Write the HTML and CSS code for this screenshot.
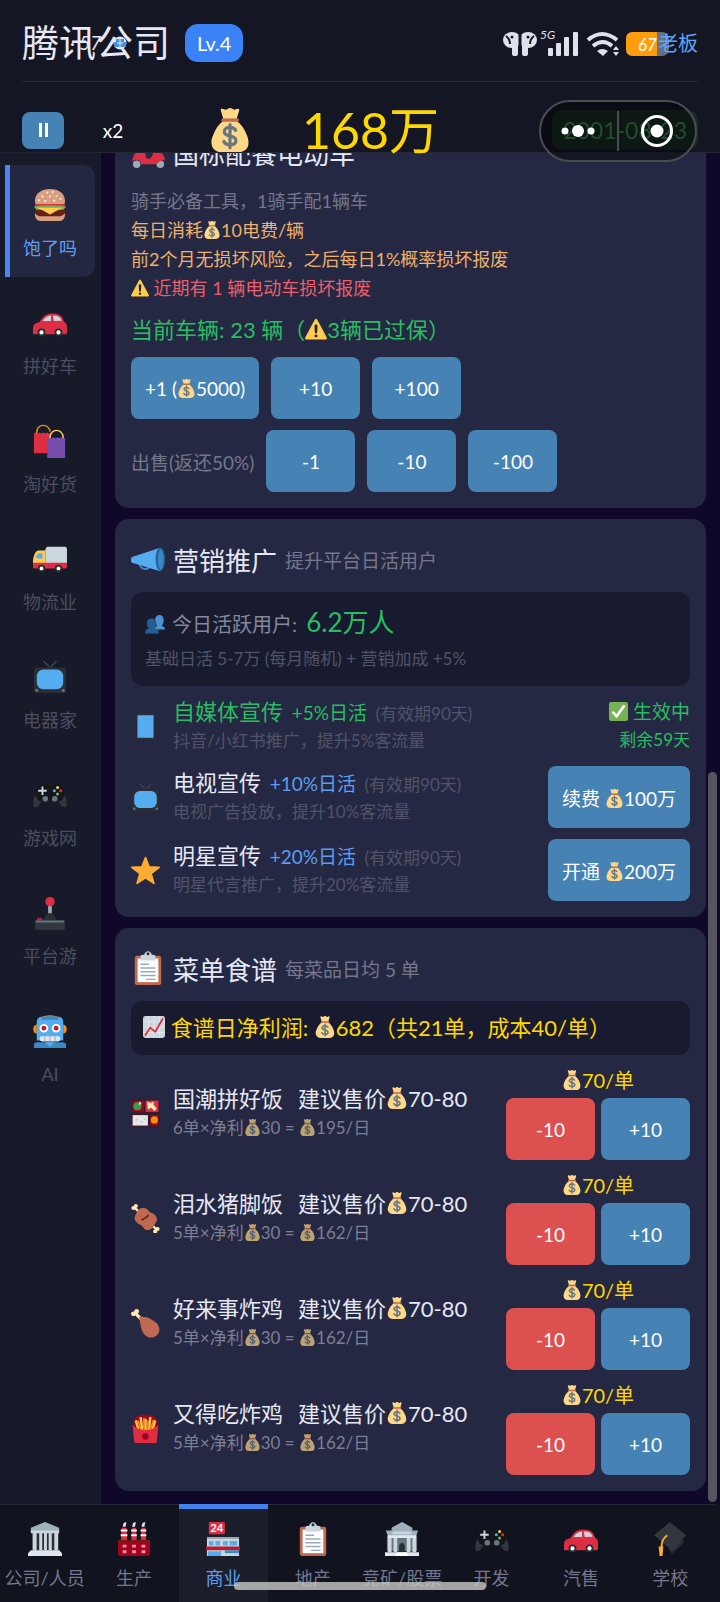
FILE: index.html
```
<!DOCTYPE html>
<html lang="zh-CN">
<head>
    <meta charset="UTF-8">
    <meta name="viewport" content="width=device-width, initial-scale=1.0">
    <title>腾讯公司</title>
    <link rel="stylesheet" href="styles.css">
</head>
<body>
    <!-- Icon sprite -->
    <svg class="sprite" aria-hidden="true">
        <symbol id="bag" viewBox="0 0 36 36">
            <path fill="#fdd888" d="M31.9 22.6c-1.7-5.2-4.7-9.3-8.8-12.4L25.5 2c.4-1.8-1.600-1.700-2.800-.9-1 .7-1.800.2-2.700-.4-1.200-.8-2.500-.8-3.700 0-.9.600-1.900 1.100-3 .4-1.200-.8-3.400-.9-2.800.9l2.400 8.200C8.700 13.300 5.800 17.400 4.100 22.600 3 25.200 2.500 27 3 30c.8 4 4 6 8 6h14c4 0 7.400-2 8-6 .4-3-.1-4.800-1.100-7.400z"/>
            <path fill="#bf6952" d="M24.500 8.600H11.800c-1.200 0-1.200 2.600 0 2.600h12.700c1.200 0 1.200-2.600 0-2.600z"/>
            <path fill="none" stroke="#67757f" stroke-width="2.600" stroke-linecap="round" d="M22.600 18.300c-.7-1.600-2.400-2.400-4.600-2.400-2.800 0-4.700 1.300-4.700 3.500 0 4.800 9.600 2.400 9.600 7.200 0 2.200-2 3.500-4.900 3.500-2.400 0-4.300-1-5-2.800M18 13.500v19"/>
        </symbol>
        <symbol id="warn" viewBox="0 0 36 36">
            <path fill="#ffcc4d" d="M2.700 35c-2.200 0-3.200-1.600-2.100-3.500L16.100 2.500c1-1.900 2.800-1.900 3.800 0l15.500 29c1 1.900.1 3.500-2.100 3.500z"/>
            <path fill="#231f20" d="M15.600 13c0-1.400 1-2.300 2.400-2.300s2.400.9 2.400 2.300l-.5 10.500c-.1 2.500-3.700 2.500-3.800 0z"/><circle fill="#231f20" cx="18" cy="29.300" r="2.400"/>
        </symbol>
        <symbol id="burger" viewBox="0 0 36 36">
            <path fill="#d99e82" d="M2 14C2 5.500 9 1 18 1s16 4.500 16 13c0 3-2 4-4 4H6c-2 0-4-1-4-4zM2 27h32c0 5-2 8-7 8H9c-5 0-7-3-7-8z"/>
            <path fill="#662113" d="M2 24c0-2 3-3 16-3s16 1 16 3c0 5-4 6-8 6H10c-4 0-8-1-8-6z"/>
            <path fill="#dd2e44" d="M2 17h32v4H2z"/><path fill="#77b255" d="M1 20c3-2 31-2 34 0l-3 3H4z"/>
            <path fill="#ffcc4d" d="M4 21h28l-7 3-7 4-7-4z"/>
            <g fill="#ffe8b6"><circle cx="10" cy="9" r="1.200"/><circle cx="15" cy="5" r="1.200"/><circle cx="21" cy="4.500" r="1.200"/><circle cx="18" cy="9" r="1.200"/><circle cx="25" cy="8.500" r="1.200"/><circle cx="29" cy="11.500" r="1.200"/><circle cx="13" cy="14" r="1.200"/><circle cx="22.500" cy="13.500" r="1.200"/><circle cx="6.500" cy="13" r="1.200"/></g>
        </symbol>
        <symbol id="car" viewBox="0 0 36 36">
            <path fill="#dd2e44" d="M0 29v-5c0-4 2-6 7-7 3-5 6-9 13-9 9 0 11 3 13 9 3 1 3 4 3 7v4c0 1-1 2-2 2H2c-1 0-2 0-2-1z"/>
            <path fill="#ccd6dd" d="M10 16c2-3 4-5.500 9-6v6zM21 10c6 0 8 2 9.500 5.500L22 16z"/>
            <circle fill="#292f33" cx="9" cy="28" r="4.200"/><circle fill="#fff" cx="9" cy="28" r="2.200"/><circle fill="#292f33" cx="27" cy="28" r="4.200"/><circle fill="#fff" cx="27" cy="28" r="2.200"/>
        </symbol>
        <symbol id="bags" viewBox="0 0 36 36">
            <path fill="#dd2e44" d="M1 10l2-1 2 1 2-1 2 1 2-1 2 1 2-1 2 1 2-1v22H1z"/>
            <path fill="none" stroke="#f4900c" stroke-width="1.500" d="M4 10C3-1 17-1 18 8"/>
            <path fill="#744eaa" d="M15 15l2-1 2 1 3-1 2 1 2-1 2 1 2-1 4 1v21H15z"/>
            <path fill="none" stroke="#ffcc4d" stroke-width="1.500" d="M18 15c0-11 14-11 14 0"/>
        </symbol>
        <symbol id="truck" viewBox="0 0 36 36">
            <path fill="#ccd6dd" d="M13 9c0-2 1-4 3-4h18c1 0 2 1 2 3v16H13z"/>
            <path fill="#ffcc4d" d="M0 24v-5c1-6 3-10 6-10h7v14z"/><path fill="#5dadec" d="M3 17c1-4 2-5 4-5h3v6z"/>
            <path fill="#dd2e44" d="M0 22h36v4c0 2-1 2-2 2H2c-1 0-2 0-2-1z"/>
            <circle fill="#292f33" cx="9" cy="28" r="4"/><circle fill="#fff" cx="9" cy="28" r="2"/><circle fill="#292f33" cx="27" cy="28" r="4"/><circle fill="#fff" cx="27" cy="28" r="2"/>
        </symbol>
        <symbol id="tv" viewBox="0 0 36 36">
            <path fill="none" stroke="#414a50" stroke-width="1.300" d="M11 1l7 7 7-7"/>
            <path fill="#292f33" d="M14 8c1-2 7-2 8 0h10c2 0 3 1 3 3v21c0 2-1 3-3 3H4c-2 0-3-1-3-3V11c0-2 1-3 3-3z"/>
            <rect fill="#55acee" x="4" y="10" width="28" height="21" rx="7"/><circle fill="#67757f" cx="4" cy="32" r="1.600"/><circle fill="#67757f" cx="32" cy="32" r="1.600"/>
        </symbol>
        <symbol id="pad" viewBox="0 0 36 36">
            <path fill="#31373d" d="M1 21l5-6h24l5 6c1 6 1 10-1 10-5 0-5-6-9-7H11c-4 1-4 7-9 7-2 0-2-4-1-10z"/>
            <path fill="#141719" d="M3 16c0-5 3-9 7-9 3 0 3 1 5 1h6c2 0 2-1 5-1 4 0 7 4 7 9 0 6-3 9-7 9-3 0-3-1-5-1h-6c-2 0-2 1-5 1-4 0-7-3-7-9z"/>
            <path stroke="#ccd6dd" stroke-width="2" d="M10 9v9M5.500 13.500h9"/><circle fill="#67757f" cx="13" cy="22" r="3"/><circle fill="#67757f" cx="23" cy="22" r="3"/>
            <circle fill="#ffcc4d" cx="26" cy="10" r="1.600"/><circle fill="#55acee" cx="22.600" cy="13.500" r="1.600"/><circle fill="#dd2e44" cx="29.400" cy="13.500" r="1.600"/><circle fill="#77b255" cx="26" cy="17" r="1.600"/>
        </symbol>
        <symbol id="stick" viewBox="0 0 36 36">
            <path fill="#99aab5" d="M16 9h4v12h-4z"/><circle fill="#dd2e44" cx="18" cy="6" r="5"/>
            <path fill="#292f33" d="M11 26c2-5 3-8 7-8s5 3 7 8z"/><rect fill="#be1931" x="4" y="23" width="6" height="4" rx="1.500"/>
            <path fill="#31373d" d="M3 26h30l1 8c0 1-1 2-2 2H4c-1 0-2-1-2-2z"/><path fill="#67757f" d="M3 26h30l.3 2H2.700z"/>
        </symbol>
        <symbol id="robot" viewBox="0 0 36 36">
            <path fill="#f4900c" d="M8 5c2-5 18-5 20 0zM4 11c-5 0-5 10 0 10zM32 11c5 0 5 10 0 10z"/>
            <path fill="#55acee" d="M4 9c0-4 2-6 6-6h16c4 0 6 2 6 6v19H4z"/><path fill="#3b88c3" d="M1 33c0-2 1-3 4-3h26c3 0 4 1 4 3v3H1zM9 4c3-2 15-2 18 0v2H9z"/>
            <path fill="#55acee" d="M13 30h10l-5 5z"/>
            <circle fill="#fff" cx="11.500" cy="15" r="4.500"/><circle fill="#fff" cx="24.500" cy="15" r="4.500"/><circle fill="#be1931" cx="11.500" cy="15" r="2.500"/><circle fill="#be1931" cx="24.500" cy="15" r="2.500"/>
            <rect fill="#e1e8ed" x="7" y="23.500" width="22" height="5.500" rx="2.500"/><path stroke="#99aab5" d="M12.500 23.500V29M18 23.500V29M23.500 23.500V29"/>
        </symbol>
        <symbol id="horn" viewBox="0 0 36 36">
            <path fill="none" stroke="#3b88c3" stroke-width="2" d="M9 22c0 7 9 9 11 3"/>
            <path fill="#55acee" d="M1 16L31 6v25L1 22c-1.300-1-1.300-5 0-6z"/><ellipse fill="#226699" cx="31" cy="18.500" rx="5" ry="12.500"/><ellipse fill="#3b88c3" cx="31.500" cy="18.500" rx="3" ry="10.500"/>
        </symbol>
        <symbol id="people" viewBox="0 0 36 36">
            <path fill="#4a93d3" d="M36 28H18v-3c1-3 3-3 4-4-6-5-5-19 4-19s10 14 4 19c2 1 6 2 6 7z"/>
            <path fill="#245f92" d="M0 35c0-6 3-8 7-9-6-6-5-18 5-18s11 12 5 18c5 1 8 3 8 9z"/>
        </symbol>
        <symbol id="phone" viewBox="0 0 36 36">
            <rect fill="#292f33" x="7" y="1" width="22" height="34" rx="3"/><path fill="#55acee" d="M8 4h20v28H8z"/>
        </symbol>
        <symbol id="star" viewBox="0 0 36 36">
            <path fill="#ffac33" stroke="#ffac33" stroke-width="2" stroke-linejoin="round" d="M18 2l4.500 11.500L35 14l-10 8 3.500 12L18 27 7.500 34 11 22 1 14l12.500-.5z"/>
        </symbol>
        <symbol id="check" viewBox="0 0 36 36">
            <rect fill="#77b255" width="36" height="36" rx="4"/><path fill="none" stroke="#fff" stroke-width="5" stroke-linecap="round" stroke-linejoin="round" d="M8 20l6.500 7L28 8"/>
        </symbol>
        <symbol id="clip" viewBox="0 0 36 36">
            <rect fill="#c1694f" x="4" y="5" width="28" height="31" rx="2.500"/><path fill="#fff" d="M7 8h22v25H7z"/>
            <path fill="#ccd6dd" d="M10 10V6c0-1 1-2 3-2h1c1-5 7-5 8 0h1c2 0 3 1 3 2v4z"/><circle fill="#292f33" cx="18" cy="3" r="1.600"/>
            <path stroke="#99aab5" stroke-width="1.500" d="M10 14h9M10 18h16M10 22h16M10 26h16M16 30h10"/>
        </symbol>
        <symbol id="chart" viewBox="0 0 36 36">
            <rect fill="#ccd6dd" width="36" height="36" rx="4"/><path stroke="#e8eef2" d="M0 9h36M0 18h36M0 27h36M9 0v36M18 0v36M27 0v36"/>
            <path fill="none" stroke="#dd2e44" stroke-width="3" stroke-linecap="round" stroke-linejoin="round" d="M4 31l8-12 8 7L32 5"/>
        </symbol>
        <symbol id="bento" viewBox="0 0 36 36">
            <rect fill="#3a1d2c" width="36" height="36" rx="3"/><path fill="#a0041e" d="M2 2h14v14H2z"/><path fill="#dd2e44" d="M18 2h16v14H18z"/>
            <path fill="#e6e7e8" d="M2 20h19v13H2z"/><path fill="#a0041e" d="M24 20h10v13H24z"/><circle fill="#3e9b4c" cx="8" cy="9" r="5"/><path fill="#fff" d="M10 3l3 2-2 3z"/>
            <path fill="#ffe8b6" d="M20 3l4 2 4-2v4l4 5-3 3-4-4-4 2z"/><circle fill="#f4900c" cx="29" cy="26" r="4.500"/><path stroke="#99aab5" d="M6 26h2M12 28h2M16 25h2"/>
        </symbol>
        <symbol id="meat" viewBox="0 0 36 36">
            <path stroke="#ffe8b6" stroke-width="3" d="M4 4l28 28"/><g fill="#ffe8b6"><circle cx="3" cy="5" r="2.500"/><circle cx="6" cy="2.500" r="2.500"/><circle cx="33" cy="31" r="2.500"/><circle cx="30" cy="34" r="2.500"/></g>
            <path fill="#bf6952" d="M5 15c2-3 2-9 9-10 7-1 7 4 11 6 7 2 9 9 6 12s-2 7-8 9c-7 2-7-4-11-6-6-2-9-8-7-11z"/><path stroke="#662113" stroke-width="2" d="M13 20c3-1 6-4 9-6"/>
        </symbol>
        <symbol id="leg" viewBox="0 0 36 36">
            <path stroke="#ffe8b6" stroke-width="4" d="M4 4l11 11"/><circle fill="#ffe8b6" cx="3" cy="6" r="3"/><circle fill="#ffe8b6" cx="7" cy="3" r="3"/>
            <path fill="#bf6952" d="M10 10c8-2 18 3 23 9 8 12-7 22-16 13-5-5-5-14-7-22z"/>
        </symbol>
        <symbol id="fries" viewBox="0 0 36 36">
            <path fill="#a0041e" d="M2 14C4 2 10 1 18 1s14 1 16 13l-2 7H4z"/>
            <path stroke="#ffcc4d" stroke-width="3" d="M6 8l4 14M12 4l2 18M18 6v15M24 4l-2 18M30 8l-4 14"/><path stroke="#f4900c" stroke-width="2" d="M9 8l3 12M16 5v14M21 8v12M28 7l-4 13"/>
            <path fill="#dd2e44" d="M2 14c9 8 23 8 32 0l-2 20c0 1-1 2-2 2H6c-1 0-2-1-2-2z"/><circle fill="#a0041e" cx="18" cy="28" r="4"/>
        </symbol>
        <symbol id="scooter" viewBox="0 0 36 36">
            <circle fill="#99aab5" cx="6" cy="31" r="4"/><circle fill="#99aab5" cx="31" cy="31" r="4"/>
            <path fill="#dd2e44" d="M1 28c1-6 4-8 4-12h9c2 3 1 8 3 9 6 1 6-5 7-10l-2-9 5-1 2 12c4 2 7 5 7 10-5-1-6 3-11 4H11c-1-5-6-6-10-3z"/>
        </symbol>
        <symbol id="hall" viewBox="0 0 36 36">
            <path fill="#9fb1bd" d="M18 0l15 6v4H3V6z"/><path fill="#8899a6" d="M5 12h26v18H5z"/><path fill="#292f33" d="M9 12h3v18H9zM15 12h2v18h-2zM20 12h2v18h-2zM25 12h3v18h-3z"/>
            <path fill="#ccd6dd" d="M3 9h30v3H3zM5 12h4v18H5zM12 12h3v18h-3zM17 12h3v18h-3zM22 12h3v18h-3zM28 12h4v18h-4z"/><path fill="#e1e8ed" d="M3 30h30l3 3v3H0v-3z"/>
        </symbol>
        <symbol id="bank" viewBox="0 0 36 36">
            <path fill="#66757f" d="M2 15h32v16H2z"/><path fill="#9fb1bd" d="M18 0l11 6v3h6l-2 6H3L1 9h6V6z"/><path fill="#ccd6dd" d="M8 10h20v3H8zM3 16h4v16H3zM9 16h4v16H9zM23 16h4v16h-4zM29 16h4v16h-4z"/>
            <path fill="#e1e8ed" d="M0 32h36v4H0zM3 14h30v3H3z"/><path fill="#292f33" d="M15 32v-6c0-5 6-5 6 0v6z"/><path fill="#fff" d="M13 32h10l2 4H11z"/>
        </symbol>
        <symbol id="factory" viewBox="0 0 36 36">
            <path fill="#dd2e44" d="M5 6h5l1 15H4zM16 6h4l1 15h-6zM26 6h4l1 15h-6z"/><path stroke="#fff" stroke-width="2" d="M4 9h7M15 9h6M25 9h6M4 14h7M15 14h6M25 14h6"/>
            <path fill="#e1e8ed" d="M6 5l1-4 3-1-1 5zM16 5l1-4 3-1-1 5zM26 5l1-4 3-1-1 5z"/><path fill="#a0041e" d="M1 19h34v15c0 1-1 2-2 2H3c-1 0-2-1-2-2z"/>
            <path fill="#ff8f9e" d="M6 24h4v3H6zM16 24h4v3h-4zM26 24h4v3h-4zM6 30h4v3H6zM16 30h4v3h-4zM26 30h4v3h-4z"/><path fill="#662113" d="M1 19h34v2H1z"/>
        </symbol>
        <symbol id="store" viewBox="0 0 36 36">
            <rect fill="#dd2e44" x="3" width="17" height="13" rx="1"/><path fill="#99aab5" d="M1 16h34v3H1z"/><path fill="#ccd6dd" d="M1 18h34v18H1z"/>
            <path fill="#55acee" d="M3 20h5v5H3zM10 20h5v5h-5zM18 20h5v5h-5zM25 20h8v5h-8zM2 31h14v5H2z"/><path fill="#be1931" d="M0 26h36v4H0z"/><path fill="#3b88c3" d="M20 30h15v3H20z"/>
            <text x="11.500" y="11" font-size="12" font-weight="700" text-anchor="middle" fill="#fff">24</text>
        </symbol>
        <symbol id="cap" viewBox="0 0 36 36">
            <path fill="#292f33" d="M12 20l8 14 14-14z"/><path fill="#31373d" d="M18 0l17 14-14 17L1 14z"/>
            <path fill="none" stroke="#ffac33" stroke-width="2" d="M15 14c-5 4-6 7-6 14"/><path fill="#ffac33" d="M6 26h5l-1 10H7z"/>
        </symbol>
    </svg>

    <div class="app">
        <header class="header">
            <div class="company">
                <h1>腾讯公司</h1>
                <span class="level">Lv.4</span>
                <span class="role">老板</span>
            </div>
            <div class="controls">
                <button class="pause" aria-label="暂停"><span></span></button>
                <button class="speed">x2</button>
                <div class="money"><svg class="money-icon"><use href="#bag"/></svg>168万</div>
                <span class="date">2001-08-23</span>
            </div>

            <!-- Phone status bar lies over the header -->
            <div class="clock">· 57</div>
            <svg class="clock-badge" viewBox="0 0 14 14"><circle cx="7" cy="7" r="6.500" fill="#dbe9f8"/><path d="M3 3h8v3h2v5H1V6h2z" fill="#4a90d9"/><path d="M7 3v8M4 7h6" stroke="#dbe9f8"/></svg>
            <svg class="status" viewBox="0 0 170 32">
                <g fill="#dfe2ea"><ellipse cx="12" cy="12" rx="9" ry="8"/><rect x="12" y="8" width="6" height="20" rx="2"/><ellipse cx="28" cy="12" rx="9" ry="8"/><rect x="22" y="8" width="6" height="20" rx="2"/></g>
                <g fill="none" stroke="#141624" stroke-width="2"><path d="M6 8q4 3 4 8M34 8q-4 3-4 8"/><path d="M20 3v26" stroke-width="3"/></g><circle cx="12" cy="9" r="1.500" fill="#141624"/><circle cx="28" cy="9" r="1.500" fill="#141624"/>
                <text x="40" y="11" font-size="12" font-style="italic" fill="#dfe2ea">5G</text>
                <g fill="#dfe2ea"><rect x="48" y="20" width="5" height="8" rx="1"/><rect x="56" y="15" width="5" height="13" rx="1"/><rect x="64" y="9" width="5" height="19" rx="1"/><rect x="73" y="4" width="5" height="24" rx="1"/></g>
                <g fill="none" stroke="#dfe2ea" stroke-width="4"><path d="M88 12q14-12 29 0M93 18q10-8 19 0"/></g>
                <path d="M97 23q5-4 11 0l-5 5z" fill="#dfe2ea"/><path d="M113 22l3-4 3 4zM113 24h6l-3 4z" fill="#dfe2ea"/>
                <rect x="126" y="4" width="43" height="24" rx="7" fill="#667085"/><path d="M133 4h24v24h-24q-7 0-7-7V11q0-7 7-7z" fill="#ff9d0a"/>
                <text x="138" y="23" font-size="17" font-style="italic" fill="#fff">67</text>
            </svg>
            <svg class="capsule" viewBox="0 0 158 62">
                <rect x="1" y="1" width="156" height="60" rx="30" fill="#000" fill-opacity=".45" stroke="#4c4c54" stroke-width="2"/>
                <path d="M79 11v40" stroke="#4c4c54" stroke-width="2"/>
                <g fill="#fff"><circle cx="26" cy="31" r="3.500"/><circle cx="39" cy="31" r="6"/><circle cx="52" cy="31" r="3.500"/><circle cx="118" cy="31" r="6.500"/></g>
                <circle cx="118" cy="31" r="14.500" fill="none" stroke="#fff" stroke-width="3"/>
            </svg>
        </header>

        <div class="body">
            <nav class="sidebar">
                <button class="side-item active"><svg><use href="#burger"/></svg>饱了吗</button>
                <button class="side-item"><svg><use href="#car"/></svg>拼好车</button>
                <button class="side-item"><svg><use href="#bags"/></svg>淘好货</button>
                <button class="side-item"><svg><use href="#truck"/></svg>物流业</button>
                <button class="side-item"><svg><use href="#tv"/></svg>电器家</button>
                <button class="side-item"><svg><use href="#pad"/></svg>游戏网</button>
                <button class="side-item"><svg><use href="#stick"/></svg>平台游</button>
                <button class="side-item"><svg><use href="#robot"/></svg>AI</button>
            </nav>

            <main class="content">
                <section class="card">
                    <div class="card-head"><svg><use href="#scooter"/></svg><h2>国标配餐电动车</h2></div>
                    <div class="info">
                        <p>骑手必备工具，1骑手配1辆车</p>
                        <p class="orange">每日消耗<svg class="em"><use href="#bag"/></svg>10电费/辆</p>
                        <p class="orange">前2个月无损坏风险，之后每日1%概率损坏报废</p>
                        <p class="red"><svg class="em"><use href="#warn"/></svg> 近期有 1 辆电动车损坏报废</p>
                    </div>
                    <p class="owned">当前车辆: 23 辆（<svg class="em"><use href="#warn"/></svg>3辆已过保）</p>
                    <div class="buttons">
                        <button class="btn">+1 (<svg class="em"><use href="#bag"/></svg>5000)</button>
                        <button class="btn">+10</button>
                        <button class="btn">+100</button>
                    </div>
                    <div class="buttons">
                        <span class="sell">出售(返还50%)</span>
                        <button class="btn">-1</button>
                        <button class="btn">-10</button>
                        <button class="btn">-100</button>
                    </div>
                </section>

                <section class="card">
                    <div class="card-head"><svg><use href="#horn"/></svg><h2>营销推广</h2><span>提升平台日活用户</span></div>
                    <div class="panel">
                        <p class="users"><svg class="em"><use href="#people"/></svg> 今日活跃用户: <strong>6.2万人</strong></p>
                        <p class="note">基础日活 5-7万 (每月随机) + 营销加成 +5%</p>
                    </div>
                    <div class="row">
                        <svg class="row-icon"><use href="#phone"/></svg>
                        <div class="row-text">
                            <h3 class="green">自媒体宣传 <em>+5%日活</em> <small>(有效期90天)</small></h3>
                            <p>抖音/小红书推广，提升5%客流量</p>
                        </div>
                        <div class="state"><p><svg class="em"><use href="#check"/></svg> 生效中</p><p class="left">剩余59天</p></div>
                    </div>
                    <div class="row">
                        <svg class="row-icon"><use href="#tv"/></svg>
                        <div class="row-text">
                            <h3>电视宣传 <em>+10%日活</em> <small>(有效期90天)</small></h3>
                            <p>电视广告投放，提升10%客流量</p>
                        </div>
                        <button class="btn">续费 <svg class="em"><use href="#bag"/></svg>100万</button>
                    </div>
                    <div class="row">
                        <svg class="row-icon"><use href="#star"/></svg>
                        <div class="row-text">
                            <h3>明星宣传 <em>+20%日活</em> <small>(有效期90天)</small></h3>
                            <p>明星代言推广，提升20%客流量</p>
                        </div>
                        <button class="btn">开通 <svg class="em"><use href="#bag"/></svg>200万</button>
                    </div>
                </section>

                <section class="card">
                    <div class="card-head"><svg><use href="#clip"/></svg><h2>菜单食谱</h2><span>每菜品日均 5 单</span></div>
                    <div class="panel profit"><svg class="em"><use href="#chart"/></svg> 食谱日净利润: <svg class="em"><use href="#bag"/></svg>682（共21单，成本40/单）</div>
                    <div class="row">
                        <svg class="row-icon"><use href="#bento"/></svg>
                        <div class="row-text dish">
                            <h3>国潮拼好饭<span>建议售价<svg class="em"><use href="#bag"/></svg>70-80</span></h3>
                            <p>6单×净利<svg class="em"><use href="#bag"/></svg>30 = <svg class="em"><use href="#bag"/></svg>195/日</p>
                        </div>
                        <div class="price">
                            <p><svg class="em"><use href="#bag"/></svg>70/单</p>
                            <button class="btn minus">-10</button>
                            <button class="btn">+10</button>
                        </div>
                    </div>
                    <div class="row">
                        <svg class="row-icon"><use href="#meat"/></svg>
                        <div class="row-text dish">
                            <h3>泪水猪脚饭<span>建议售价<svg class="em"><use href="#bag"/></svg>70-80</span></h3>
                            <p>5单×净利<svg class="em"><use href="#bag"/></svg>30 = <svg class="em"><use href="#bag"/></svg>162/日</p>
                        </div>
                        <div class="price">
                            <p><svg class="em"><use href="#bag"/></svg>70/单</p>
                            <button class="btn minus">-10</button>
                            <button class="btn">+10</button>
                        </div>
                    </div>
                    <div class="row">
                        <svg class="row-icon"><use href="#leg"/></svg>
                        <div class="row-text dish">
                            <h3>好来事炸鸡<span>建议售价<svg class="em"><use href="#bag"/></svg>70-80</span></h3>
                            <p>5单×净利<svg class="em"><use href="#bag"/></svg>30 = <svg class="em"><use href="#bag"/></svg>162/日</p>
                        </div>
                        <div class="price">
                            <p><svg class="em"><use href="#bag"/></svg>70/单</p>
                            <button class="btn minus">-10</button>
                            <button class="btn">+10</button>
                        </div>
                    </div>
                    <div class="row">
                        <svg class="row-icon"><use href="#fries"/></svg>
                        <div class="row-text dish">
                            <h3>又得吃炸鸡<span>建议售价<svg class="em"><use href="#bag"/></svg>70-80</span></h3>
                            <p>5单×净利<svg class="em"><use href="#bag"/></svg>30 = <svg class="em"><use href="#bag"/></svg>162/日</p>
                        </div>
                        <div class="price">
                            <p><svg class="em"><use href="#bag"/></svg>70/单</p>
                            <button class="btn minus">-10</button>
                            <button class="btn">+10</button>
                        </div>
                    </div>
                </section>
                <div class="scrollbar"></div>
            </main>
        </div>

        <nav class="tabs">
            <button class="tab"><svg><use href="#hall"/></svg>公司/人员</button>
            <button class="tab"><svg><use href="#factory"/></svg>生产</button>
            <button class="tab active"><svg><use href="#store"/></svg>商业</button>
            <button class="tab"><svg><use href="#clip"/></svg>地产</button>
            <button class="tab"><svg><use href="#bank"/></svg>竞矿/股票</button>
            <button class="tab"><svg><use href="#pad"/></svg>开发</button>
            <button class="tab"><svg><use href="#car"/></svg>汽售</button>
            <button class="tab"><svg><use href="#cap"/></svg>学校</button>
            <div class="home-bar"></div>
        </nav>
    </div>
</body>
</html>
```

FILE: styles.css
```
* {
    box-sizing: border-box;
}
body {
    margin: 0;
    background-color: #100828;
    color: #e6e8f5;
    font-family: Lato, "Noto Sans CJK SC", sans-serif;
    font-size: 19px;
}
h1, h2, h3, p {
    margin: 0;
    font-weight: 400;
}
button {
    border: none;
    padding: 0;
    background: none;
    color: inherit;
    font-family: inherit;
    font-size: 19px;
    cursor: pointer;
}
.sprite {
    position: absolute;
    width: 0;
    height: 0;
}
.em {
    width: 1em;
    height: 1em;
    vertical-align: -2px;
}
.app {
    display: flex;
    flex-direction: column;
    height: 100vh;
}

/* header */
.header {
    position: relative;
    z-index: 2;
    padding: 0 22px;
    background-color: #141624;
    border-bottom: 1px solid #242637;
}
.company {
    display: flex;
    align-items: center;
    height: 82px;
    padding-top: 4px;
    border-bottom: 1px solid #262838;
}
.company h1 {
    font-size: 37px;
    line-height: 50px;
}
.level {
    margin-left: 15px;
    padding: 0 12px;
    border-radius: 13px;
    background-color: #3b82f6;
    color: #fff;
    font-size: 20px;
    line-height: 38px;
}
.role {
    position: relative;
    z-index: 1;
    margin-left: auto;
    color: #60a5fa;
    font-size: 20px;
}
.controls {
    display: flex;
    align-items: center;
    height: 70px;
    padding-top: 26px;
}
.pause {
    display: flex;
    align-items: center;
    justify-content: center;
    width: 42px;
    height: 37px;
    border-radius: 8px;
    background-color: #4682b4;
}
.pause span {
    width: 9px;
    height: 14px;
    border: solid #fff;
    border-width: 0 3px;
}
.speed {
    width: 98px;
    color: #fff;
}
.money {
    display: flex;
    flex: 1;
    align-items: center;
    gap: 50px;
    padding-left: 46px;
    color: #ffd700;
    font-size: 50px;
    line-height: 44px;
}
.money-icon {
    width: 44px;
    height: 44px;
}
.date {
    padding: 0 11px;
    border-radius: 10px;
    background-color: #182b24;
    color: #3f8a4e;
    font-size: 23px;
    line-height: 40px;
}
.clock {
    position: absolute;
    top: 31px;
    left: 70px;
    font-size: 19px;
    font-style: italic;
}
.clock-badge {
    position: absolute;
    top: 36px;
    left: 113px;
    width: 14px;
    height: 14px;
}
.status {
    position: absolute;
    top: 28px;
    right: 50px;
    width: 170px;
    height: 32px;
}
.capsule {
    position: absolute;
    top: 100px;
    right: 23px;
    width: 158px;
    height: 62px;
}

/* sidebar */
.body {
    display: flex;
    flex: 1;
    min-height: 0;
}
.sidebar {
    display: flex;
    flex-direction: column;
    gap: 6px;
    width: 101px;
    padding: 12px 6px 0 5px;
    background-color: #171a29;
}
.side-item {
    display: flex;
    flex-direction: column;
    align-items: center;
    height: 112px;
    padding-top: 23px;
    border-radius: 0 12px 12px 0;
    color: #4b4e60;
    font-size: 18px;
    line-height: 28px;
}
.side-item svg {
    width: 34px;
    height: 34px;
    margin-bottom: 12px;
}
.side-item.active {
    background-color: #232740;
    box-shadow: inset 5px 0 #4a86ef;
    color: #609ff0;
}

/* cards, scrolled to the end */
.content {
    position: relative;
    display: flex;
    flex: 1;
    flex-direction: column;
    justify-content: flex-end;
    gap: 11px;
    padding: 0 14px 13px;
    overflow: hidden;
}
.card {
    flex-shrink: 0;
    padding: 16px;
    border-radius: 14px;
    background-color: #252842;
}
.card-head {
    display: flex;
    align-items: center;
    gap: 8px;
    height: 48px;
    margin-bottom: 9px;
    color: #74778c;
}
.card-head svg {
    width: 34px;
    height: 34px;
}
.card-head h2 {
    color: #e6e8f5;
    font-size: 26px;
}
.info {
    padding-top: 2px;
    color: #74778c;
    font-size: 18px;
    line-height: 29px;
}
.info .orange {
    color: #eeb06c;
}
.info .red {
    color: #ea5f6d;
}
.owned {
    padding: 10px 0;
    color: #29bd63;
    font-size: 22px;
    line-height: 34px;
}
.buttons {
    display: flex;
    align-items: center;
    gap: 12px;
}
.buttons + .buttons {
    margin-top: 11px;
}
.sell {
    color: #74778c;
}
.btn {
    flex-shrink: 0;
    min-width: 89px;
    height: 62px;
    padding: 0 14px;
    border-radius: 8px;
    background-color: #4682b4;
    color: #fff;
}
.btn.minus {
    background-color: #dc5050;
}
.panel {
    padding: 12px 14px;
    border-radius: 12px;
    background-color: #181b30;
}
.users {
    color: #85889b;
    font-size: 20px;
    line-height: 40px;
}
.users .em {
    margin-right: 2px;
}
.users strong {
    margin-left: 4px;
    color: #29bd63;
    font-size: 26px;
    font-weight: 400;
    line-height: 1;
}
.note {
    color: #505369;
    font-size: 17px;
    line-height: 30px;
}
.profit {
    padding: 0 12px;
    color: #ffd700;
    font-size: 22px;
    line-height: 54px;
}
.row {
    display: flex;
    align-items: center;
    margin-top: 11px;
}
.row-icon {
    width: 29px;
    height: 29px;
    margin-right: 13px;
}
.row-text {
    flex: 1;
    white-space: nowrap;
}
.row-text h3 {
    font-size: 22px;
    line-height: 30px;
}
.row-text h3 em {
    margin-left: 3px;
    color: #5d9df2;
    font-size: 19px;
    font-style: normal;
    line-height: 1;
}
.row-text h3.green,
.row-text h3.green em {
    color: #29bd63;
}
.row-text h3 small {
    margin-left: 3px;
    color: #505369;
    font-size: 17px;
    line-height: 1;
}
.row-text p {
    color: #505369;
    font-size: 17px;
    line-height: 28px;
}
.row-text.dish h3 span {
    margin-left: 15px;
}
.row-text.dish p {
    color: #a0a3b8;
    opacity: 0.7;
}
.state {
    color: #29bd63;
    line-height: 28px;
    text-align: right;
}
.state .left {
    font-size: 17px;
}
.price {
    display: grid;
    grid-template-columns: auto auto;
    gap: 4px 6px;
}
.price p {
    grid-column: 1 / 3;
    color: #ffd700;
    font-size: 20px;
    line-height: 28px;
    text-align: center;
}
.scrollbar {
    position: absolute;
    right: 3px;
    bottom: 2px;
    width: 9px;
    height: 54%;
    border-radius: 5px;
    background-color: #57535f;
}

/* bottom tabs */
.tabs {
    position: relative;
    display: flex;
    padding-right: 5px;
    background-color: #11131f;
}
.tab {
    display: flex;
    flex: 1 0 0;
    flex-direction: column;
    align-items: center;
    min-width: 0;
    height: 98px;
    padding-top: 13px;
    border-top: 1px solid #242637;
    color: #74778c;
    font-size: 18px;
    line-height: 26px;
    white-space: nowrap;
}
.tab svg {
    width: 34px;
    height: 34px;
    margin: 4px 0 9px;
}
.tab.active {
    padding-top: 9px;
    border-top: 5px solid #4382ee;
    background-color: #1b1e2b;
    color: #609ff0;
}
.home-bar {
    position: absolute;
    bottom: 12px;
    left: 50%;
    width: 35%;
    height: 8px;
    border-radius: 4px;
    background-color: rgba(200, 200, 200, 0.8);
    transform: translateX(-50%);
}
```
